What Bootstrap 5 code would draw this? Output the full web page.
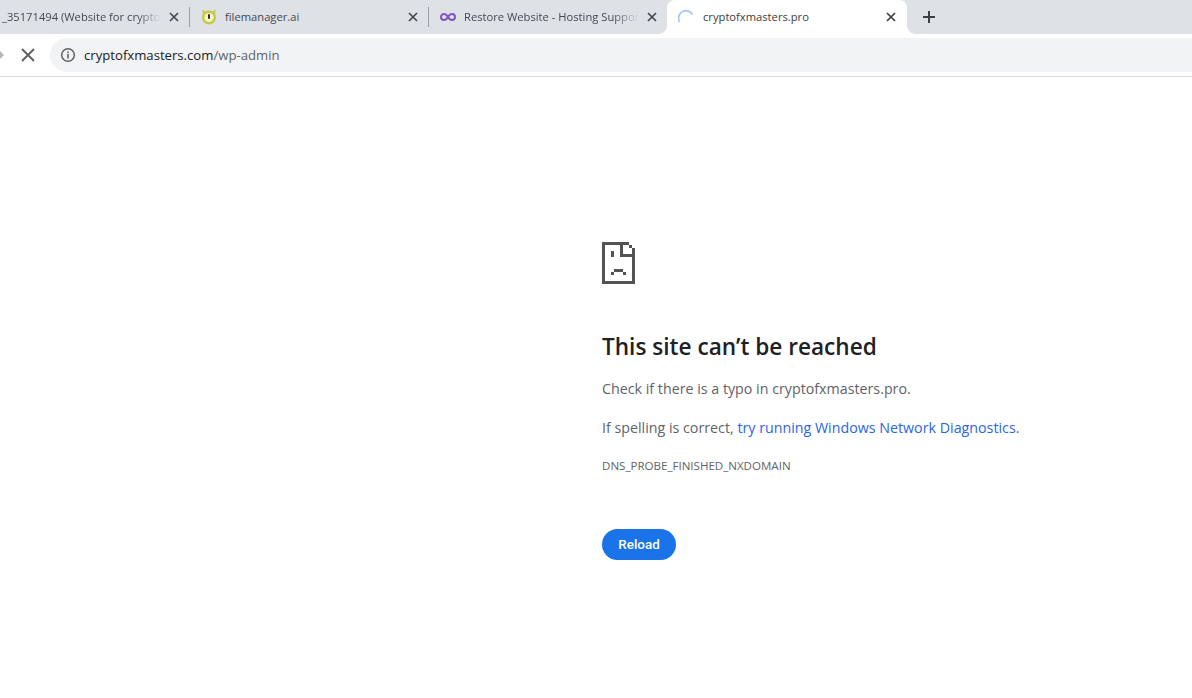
<!DOCTYPE html>
<html lang="en">
<head>
  <meta charset="UTF-8" />
  <title>cryptofxmasters.pro</title>
  <link href="https://cdn.jsdelivr.net/npm/bootstrap@5.3.2/dist/css/bootstrap.min.css" rel="stylesheet" />
  <style>
    html, body { height: 100%; }
    body { overflow: hidden; background: #fff; font-family: "Open Sans", "Noto Sans", sans-serif; }

    /* Tab strip */
    .tabstrip { height: 34px; background: #dee1e6; }
    .tab-item { height: 34px; padding: 0 7px 0 11px; font-size: 11.2px; color: #45494f; flex: 0 0 auto; }
    .tab-item.first-tab { width: 189px; padding-left: 2px; }
    .tab-item.second-tab { width: 238px; }
    .tab-item.third-tab { width: 238px; }
    .tab-item.active-tab { position: relative; width: 240px; padding-right: 8px; background: #fff; border-radius: 8px 8px 0 0; color: #3c4043; }
    .active-tab::before, .active-tab::after { content: ""; position: absolute; bottom: 0; width: 8px; height: 8px; }
    .active-tab::before { left: -8px; background: radial-gradient(circle at 0 0, transparent 7.5px, #fff 8px); }
    .active-tab::after { right: -8px; background: radial-gradient(circle at 100% 0, transparent 7.5px, #fff 8px); }
    .tab-sep { width: 1px; height: 20px; background: #9aa0a6; flex: 0 0 auto; }
    .tab-name { flex: 1 1 0; min-width: 0; white-space: nowrap; overflow: hidden; margin-left: 8px; }
    .first-tab .tab-name { margin-left: 0; }
    .active-tab .tab-name { margin-left: 9px; }
    .fade-name { margin-right: 5px; -webkit-mask-image: linear-gradient(to right, #000 85%, transparent 100%); mask-image: linear-gradient(to right, #000 85%, transparent 100%); }
    .tab-close { width: 16px; height: 16px; flex: 0 0 auto; display: block; }
    .new-tab { width: 16px; height: 16px; margin-left: 14px; display: block; }

    /* Toolbar */
    .toolbar { height: 43px; background: #fff; border-bottom: 1px solid #dadce0; padding: 4px 0 4px 0; }
    .back-tip { width: 4px; height: 10px; display: block; flex: 0 0 auto; margin-right: 16px; }
    .stop-icon { width: 16px; height: 16px; display: block; flex: 0 0 auto; }
    .omnibox { flex: 1 1 0; height: 34px; margin-left: 14px; margin-right: -40px; background: #f1f3f4; border-radius: 17px 0 0 17px; padding-left: 10px; font-size: 13.15px; color: #202124; }
    .omnibox svg { display: block; margin-right: 8px; }
    .url-text { padding-top: 1px; }
    .url-path { color: #5f6368; }

    /* Error page */
    .error-page { padding: 165px 0 0 602px; }
    .sad-icon { display: block; width: 33px; height: 42px; margin-bottom: 47px; }
    .error-page h1 { font-size: 22.6px; line-height: 32px; font-weight: 600; color: #202124; margin: 0 0 14px; white-space: nowrap; }
    .error-page p { font-size: 14.25px; line-height: 24px; color: #5f6368; margin: 0 0 15px; white-space: nowrap; }
    .error-page a { color: #2b66e6; text-decoration: none; }
    .error-code { font-size: 11.55px; line-height: 16px; color: #5f6368; margin-top: 18px; }
    .btn.reload-btn { margin-top: 55px; width: 74px; height: 31px; padding: 0; border: 0; border-radius: 16px; background: #1a73e8; color: #fff; font: 500 13.4px/31px Roboto, sans-serif; display: block; }
  </style>
</head>
<body>

<div class="tabstrip d-flex align-items-center">
  <div class="tab-item first-tab d-flex align-items-center">
    <span class="tab-name fade-name">_35171494 (Website for crypto</span>
    <svg class="tab-close" viewBox="0 0 16 16"><path d="M4 4l8 8M12 4l-8 8" stroke="#45494f" stroke-width="1.700"/></svg>
  </div>
  <div class="tab-sep"></div>
  <div class="tab-item second-tab d-flex align-items-center">
    <svg width="16" height="16" viewBox="0 0 16 16" class="flex-shrink-0">
      <path d="M1.500 .5L5 3h6l3.500-2.500L14 6H2z" fill="#c3cb45"/>
      <circle cx="8" cy="8.500" r="7" fill="#c3cb45"/>
      <circle cx="8" cy="8.500" r="4.600" fill="#f6f3cf"/>
      <rect x="7" y="5" width="2" height="5" rx="1" fill="#33322a"/>
    </svg>
    <span class="tab-name">filemanager.ai</span>
    <svg class="tab-close" viewBox="0 0 16 16"><path d="M4 4l8 8M12 4l-8 8" stroke="#45494f" stroke-width="1.700"/></svg>
  </div>
  <div class="tab-sep"></div>
  <div class="tab-item third-tab d-flex align-items-center">
    <svg width="16" height="16" viewBox="0 0 16 16" class="flex-shrink-0">
      <path d="M8 8C6.800 5.800 5.500 5 4 5 2.200 5 1 6.300 1 8s1.200 3 3 3c1.500 0 2.800-.8 4-3 1.200-2.200 2.500-3 4-3 1.800 0 3 1.300 3 3s-1.200 3-3 3c-1.500 0-2.800-.8-4-3z" fill="none" stroke="#7e57c2" stroke-width="2"/>
    </svg>
    <span class="tab-name fade-name">Restore Website - Hosting Support</span>
    <svg class="tab-close" viewBox="0 0 16 16"><path d="M4 4l8 8M12 4l-8 8" stroke="#45494f" stroke-width="1.700"/></svg>
  </div>
  <div class="tab-item active-tab d-flex align-items-center">
    <svg width="16" height="16" viewBox="0 0 16 16" class="flex-shrink-0">
      <path d="M1.500 13A7 7 0 0 1 14.500 5.500" fill="none" stroke="#a9ccf6" stroke-width="2"/>
    </svg>
    <span class="tab-name">cryptofxmasters.pro</span>
    <svg class="tab-close" viewBox="0 0 16 16"><path d="M4 4l8 8M12 4l-8 8" stroke="#3c4043" stroke-width="1.700"/></svg>
  </div>
  <svg class="new-tab" viewBox="0 0 16 16"><path d="M8 2v12M2 8h12" stroke="#3c4043" stroke-width="2"/></svg>
</div>

<div class="toolbar d-flex align-items-center">
  <svg class="back-tip" viewBox="0 0 4 10"><path d="M0 1l4 4-4 4z" fill="#b4b7bb"/></svg>
  <svg class="stop-icon" viewBox="0 0 16 16"><path d="M2 2l12 12M14 2L2 14" stroke="#5f6368" stroke-width="2"/></svg>
  <div class="omnibox d-flex align-items-center">
    <svg width="16" height="16" viewBox="0 0 16 16">
      <circle cx="8" cy="8" r="6.300" fill="none" stroke="#5f6368" stroke-width="1.500"/>
      <rect x="7.200" y="7" width="1.600" height="4.500" fill="#5f6368"/>
      <rect x="7.200" y="4.500" width="1.600" height="1.600" fill="#5f6368"/>
    </svg>
    <span class="url-text">cryptofxmasters.com<span class="url-path">/wp-admin</span></span>
  </div>
</div>

<main class="error-page">
  <svg class="sad-icon" viewBox="0 0 33 42" shape-rendering="crispEdges" fill="#535353">
    <rect x="0" y="0" width="27" height="3"/>
    <rect x="0" y="0" width="3" height="42"/>
    <rect x="0" y="39" width="33" height="3"/>
    <rect x="30" y="6" width="3" height="36"/>
    <rect x="27" y="3" width="3" height="3"/>
    <rect x="18" y="0" width="3" height="15"/>
    <rect x="21" y="12" width="12" height="3"/>
    <rect x="9" y="9" width="3" height="6"/>
    <rect x="9" y="30" width="3" height="3"/>
    <rect x="12" y="27" width="9" height="3"/>
    <rect x="21" y="30" width="3" height="3"/>
  </svg>
  <h1>This site can’t be reached</h1>
  <p>Check if there is a typo in cryptofxmasters.pro.</p>
  <p>If spelling is correct, <a href="#">try running Windows Network Diagnostics</a>.</p>
  <div class="error-code">DNS_PROBE_FINISHED_NXDOMAIN</div>
  <button type="button" class="btn reload-btn">Reload</button>
</main>

<script src="https://cdn.jsdelivr.net/npm/bootstrap@5.3.2/dist/js/bootstrap.bundle.min.js"></script>
</body>
</html>
